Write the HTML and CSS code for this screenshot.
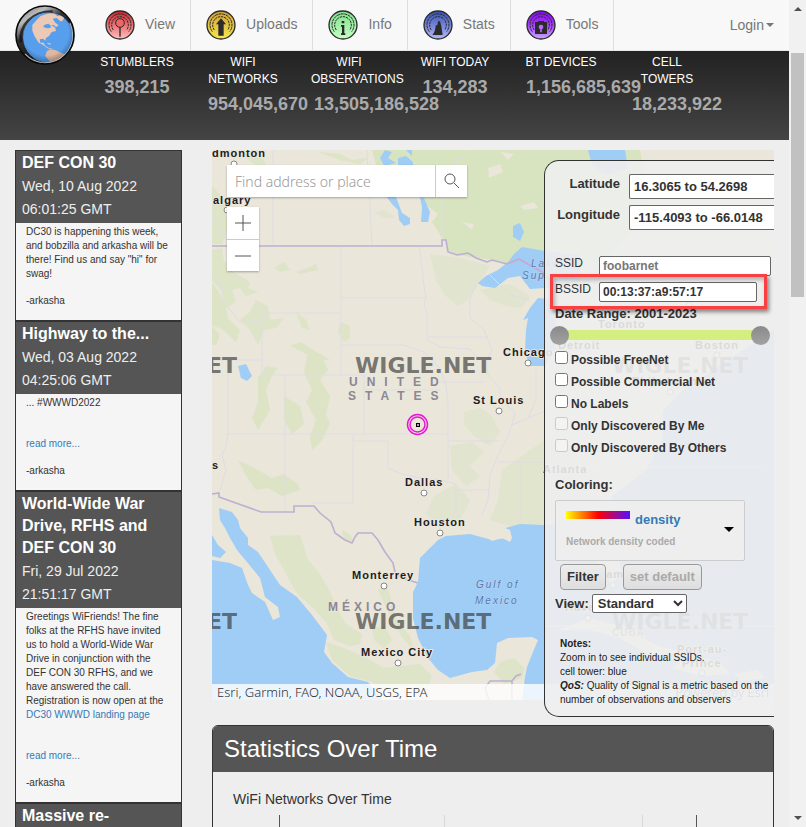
FILE: index.html
```html
<!DOCTYPE html>
<html lang="en">
<head>
<meta charset="utf-8">
<title>WiGLE: Wireless Network Mapping</title>
<meta name="viewport" content="width=device-width, initial-scale=1">
<link rel="stylesheet" href="styles.css">
</head>
<body>
<svg class="defs" aria-hidden="true">
  <defs>
    <linearGradient id="gRed" x2="0" y2="1"><stop stop-color="#c9252c"/><stop offset=".45" stop-color="#e8686b"/><stop offset="1" stop-color="#ffc0c0"/></linearGradient>
    <linearGradient id="gYellow" x2="0" y2="1"><stop stop-color="#cf9f38"/><stop offset="1" stop-color="#f5e74e"/></linearGradient>
    <linearGradient id="gGreen" x2="0" y2="1"><stop stop-color="#7fe08a"/><stop offset="1" stop-color="#c4ffc4"/></linearGradient>
    <linearGradient id="gBlue" x2="0" y2="1"><stop stop-color="#3450b8"/><stop offset="1" stop-color="#b3b6f4"/></linearGradient>
    <linearGradient id="gPurple" x2="0" y2="1"><stop stop-color="#8608f0"/><stop offset=".4" stop-color="#a030ff"/><stop offset="1" stop-color="#caa6fb"/></linearGradient>
    <g id="dial" fill="none" stroke="#2b2b2b">
      <circle cx="45" cy="45" r="42" stroke-width="4"/>
      <path d="M19 65A33 33 0 1 1 71 65" stroke-width="3" stroke-dasharray="9 2"/>
      <path d="M25 60A25 25 0 1 1 65 60" stroke-width="3" stroke-dasharray="7 2"/>
    </g>
  </defs>
</svg>
<div class="window">
  <div class="page">
    <header class="topbar">
      <a class="brand" href="#" aria-label="WiGLE home">
        <svg viewBox="45 15 180 180">
          <defs>
            <linearGradient id="gRim" x1=".1" y1="0" x2=".6" y2=".8"><stop stop-color="#777"/><stop offset=".25" stop-color="#bbb"/><stop offset=".5" stop-color="#333"/><stop offset="1" stop-color="#111"/></linearGradient>
            <radialGradient id="gShade" cx=".45" cy=".4" r=".6"><stop offset=".75" stop-color="#000" stop-opacity="0"/><stop offset="1" stop-color="#123" stop-opacity=".35"/></radialGradient>
            <clipPath id="globe"><circle cx="145" cy="113" r="76"/></clipPath>
          </defs>
          <circle cx="135" cy="105" r="86" fill="url(#gRim)"/>
          <path d="M62 128C58 75 95 35 158 35" fill="none" stroke="#111" stroke-width="8" opacity=".75"/>
          <g clip-path="url(#globe)">
            <circle cx="145" cy="113" r="76" fill="#579eec"/>
            <path fill="#ecc9b4" d="M97 92L97 75L108 62L122 48L140 42L152 40L166 43L172 49L188 43L192 56L184 65L176 59L170 54L158 56L166 68L176 76L168 81L160 74L151 77L146 71L134 74L129 80L140 85L150 84L156 76L166 84L168 93L155 96L147 108L137 115L137 122L129 116L119 118L121 128L131 128L135 137L148 145L160 147L150 148L138 142L126 133L116 128L107 114L103 107Z"/>
            <path fill="#deb8a0" d="M140 154L151 148L166 150L178 156L193 162L194 171L185 181L170 187L151 190L146 180L136 169Z"/>
            <path fill="#ecc9b4" d="M143 128l10 3-2 3-9-3zM128 68l8-3 5 5-8 1zM151 61l7 2-3 4z"/>
            <circle cx="145" cy="113" r="76" fill="url(#gShade)"/>
          </g>
          <path d="M210 68A83 83 0 0 1 75 162" fill="none" stroke="#d5d5d5" stroke-width="4" opacity=".8"/>
          <circle cx="135" cy="105" r="87" fill="none" stroke="#080808" stroke-width="5"/>
        </svg>
      </a>
      <nav class="menu">
        <a href="#"><svg viewBox="0 0 90 90"><circle cx="45" cy="45" r="42" fill="url(#gRed)"/><use href="#dial"/><circle cx="45" cy="39" r="13" fill="#e66" stroke="#2b2b2b" stroke-width="3"/><path d="M45 52V80" stroke="#2b2b2b" stroke-width="4"/></svg>View</a>
        <a href="#"><svg viewBox="0 0 90 90"><circle cx="45" cy="45" r="42" fill="url(#gYellow)"/><use href="#dial"/><path d="M45 25L60 43H53V77H37V43H30Z" fill="#2b2b2b"/></svg>Uploads</a>
        <a href="#"><svg viewBox="0 0 90 90"><circle cx="45" cy="45" r="42" fill="url(#gGreen)"/><use href="#dial"/><path d="M41 33h8v7h-8zM39 45h10v25h3v5H39v-5h3V50h-3z" fill="#2b2b2b"/></svg>Info</a>
        <a href="#"><svg viewBox="0 0 90 90"><circle cx="45" cy="45" r="42" fill="url(#gBlue)"/><use href="#dial"/><path d="M28 75C35 68 37 60 38 46L43 46L45 34H51L55 48L59 75Z" fill="#2b2b2b"/></svg>Stats</a>
        <a href="#"><svg viewBox="0 0 90 90"><circle cx="45" cy="45" r="42" fill="url(#gPurple)"/><use href="#dial"/><path d="M27 36H36V33H54V36H63V72H27Z" fill="#2b2b2b"/><circle cx="45" cy="51" r="7" fill="#b66cff"/><path d="M45 52V67" stroke="#b66cff" stroke-width="5"/></svg>Tools</a>
      </nav>
      <a class="login" href="#">Login<span class="caret"></span></a>
    </header>

    <section class="counters">
      <div class="counter"><h2>Stumblers</h2><p>398,215</p></div>
      <div class="counter"><h2>WiFi Networks</h2><p>954,045,670</p></div>
      <div class="counter"><h2>WiFi Observations</h2><p>13,505,186,528</p></div>
      <div class="counter"><h2>WiFi Today</h2><p>134,283</p></div>
      <div class="counter"><h2>BT Devices</h2><p>1,156,685,639</p></div>
      <div class="counter"><h2>Cell Towers</h2><p>18,233,922</p></div>
    </section>

    <div class="columns">
      <aside class="news">
        <article>
          <header><h3>DEF CON 30</h3><p>Wed, 10 Aug 2022 06:01:25 GMT</p></header>
          <div class="story"><p>DC30 is happening this week, and bobzilla and arkasha will be there! Find us and say "hi" for swag!</p><p>-arkasha</p></div>
        </article>
        <article>
          <header><h3>Highway to the...</h3><p>Wed, 03 Aug 2022 04:25:06 GMT</p></header>
          <div class="story"><p>... #WWWD2022</p><p class="more"><a href="#">read more...</a></p><p>-arkasha</p></div>
        </article>
        <article>
          <header><h3>World-Wide War Drive, RFHS and DEF CON 30</h3><p>Fri, 29 Jul 2022 21:51:17 GMT</p></header>
          <div class="story"><p>Greetings WiFriends! The fine folks at the RFHS have invited us to hold a World-Wide War Drive in conjunction with the DEF CON 30 RFHS, and we have answered the call. Registration is now open at the <a href="#">DC30 WWWD landing page</a></p><p class="more"><a href="#">read more...</a></p><p>-arkasha</p></div>
        </article>
        <article>
          <header><h3>Massive re-</h3></header>
        </article>
      </aside>

      <main>
        <section class="mapbox">
          <svg class="map" viewBox="212 150 562 550" preserveAspectRatio="xMinYMin slice" role="img" aria-label="Map of North America">
            <rect x="212" y="150" width="562" height="550" fill="#eae6da"/>
            <g fill="#d8e3bf">
              <path d="M372 150L545 150H640L650 215L600 262H545L520 250L507 264L492 260L478 258L457 255L447 250L445 240L441 236L432 222L438 214L428 206L418 196L398 196L392 180L378 172Z"/>
              <path opacity=".7" d="M212 185L224 200L228 228L222 244H212ZM224 150L240 152L258 168L266 164L258 150ZM318 152L340 154L352 160L368 158L360 164L340 160ZM212 250L222 248L224 262L232 262L230 270L240 276L250 282L248 288L258 292L246 296L240 288L232 290L236 302L226 308L222 292L212 280ZM274 268L284 262L290 270L280 272ZM296 272L312 266L316 264L318 270L300 274ZM256 300L268 306L270 320L284 318L276 328L264 330L258 345L250 330L240 320L250 312ZM296 312L306 320L310 330L302 328ZM340 322L350 326L350 338L344 342L338 332Z"/>
              <path opacity=".75" d="M212 282L224 300L228 318L240 330L236 342L224 330L212 325ZM212 326L220 335L216 345H212ZM258 378L266 366L278 368L272 376L266 390L270 410L258 430L252 418L258 402ZM308 352L322 356L328 370L320 380L330 396L326 414L330 424L322 440L312 450L310 436L316 420L306 402L312 390L304 372ZM284 396L300 406L304 424L292 434L284 420ZM238 460L258 470L272 478L284 474L298 484L300 490L282 496L268 488L256 490L246 476ZM290 346L300 342L330 360L318 360Z"/>
              <path opacity=".7" d="M270 536L300 535L308 560L320 574L330 592L340 614L346 624L362 634L360 644L350 646L334 640L326 622L310 605L296 592L284 570L276 556ZM326 642L344 648L370 660L384 668L420 664L432 676L428 688L412 684L392 692L372 682L350 676L332 660ZM378 590L386 584L392 602L396 620L410 636L414 650L404 640L396 628L388 612ZM372 628L384 626L392 640L384 648L374 640ZM344 540L354 542L350 534L342 530ZM494 672L500 662L514 658L524 668L522 678L504 684Z"/>
              <path d="M464 412L480 408L490 414L500 432L490 446L474 436L464 424ZM450 446L472 442L484 452L470 466L480 476L466 486L452 470ZM434 496L456 484L470 500L460 520L440 526L426 514ZM430 254L460 258L490 266L480 282L468 300L458 306L446 296L436 280ZM480 290L510 284L530 296L522 308L506 306L490 300ZM374 212L386 210L396 218L384 218Z" opacity=".45"/>
              <path d="M502 470L545 440L600 450V500L545 524L510 526L490 520L498 500Z" opacity=".5"/>
            </g>
            <g fill="#eae6da"><path d="M488 168l12-4 3 8-14 6zM520 206l14-4 4 6-14 2zM500 152l14 2-6 6zM462 222l12 2-2 6z"/></g>
            <g fill="#9fcdf5">
              <path d="M385 150L392 152L388 158L396 163L384 166L380 158ZM398 158L406 156L413 162V170H398ZM406 150L412 150L412 156ZM386 196L396 197L402 213L410 218L410 224L404 226L399 220L398 210L392 204ZM420 197L424 198L430 212L428 222L421 222L422 208ZM513 226L520 223L524 232L520 241L513 237Z"/>
              <path d="M478 283L486 276L498 270L508 262L514 254L522 247L545 251L580 255V282L545 288L530 289L520 276L508 278L495 288L482 286Z"/>
              <path d="M538 298L530 308L523 320L528 318L526 330L525 352L530 366H545L556 350V300Z"/>
              <path d="M588 150H625L628 168L605 175L592 165Z"/>
              <path d="M238 366L246 364L252 376L247 381L241 378Z"/>
              <path d="M219 508L232 512L238 520L240 528L248 538L248 545L258 552L268 567L280 585L297 597L312 615L327 635L324 652L332 663L348 677L368 682L382 700H212V560L230 563L242 568L248 585L252 593L265 602L273 620L280 617L278 607L265 597L260 578L247 562L237 550L230 538L225 528L220 520ZM212 535L218 545L226 552L220 558L212 556Z"/>
              <path d="M438 540L446 536L470 534L492 540L505 538L512 538L510 530L505 528L520 524L545 525L560 522L590 524L596 560L612 585L622 570L606 524L612 496L646 470L662 440L663 410L683 390L774 330V700H522L525 677L527 667L533 652L538 640L532 637L508 638L497 643L495 663L487 670L472 672L450 678L438 670L428 658L418 638L413 618L413 592L418 582L420 558Z"/>
            </g>
            <path fill="#eae6da" d="M486 536L498 532L512 538L510 542L502 538L492 541ZM558 630L590 618L620 626L656 645L682 652L650 656L620 638L590 630ZM672 668L690 655L720 662L730 674L700 676ZM735 674l22-4 8 8-25 3z"/>
            <g fill="none" stroke="#dfdce6" stroke-width="1">
              <path d="M273 150V246M367 150L372 245M442 196V246M341 246V375M341 298H426M419 246L424 285L426 298L424 304L427 312V340L440 347L470 349L480 360M427 337H488M261 313H341M262 313V375M262 375H364V434M228 360V434M212 360H262M285 375V510M228 434H448M353 434V503H312M353 441H388V468L402 474L420 478L440 480L456 484M448 434V480M448 402V434M341 345H404L424 352L440 368L446 385L448 402M364 390H440M212 275L222 286L222 300L232 312L240 322L261 320M475 285L470 300L470 318L484 330L488 340L492 350L486 362L488 375L500 388L500 400L515 412L512 425L506 440L498 455L490 475L488 500L482 515M448 441H500M498 462H545M456 484L456 510L462 530M520 462V522M456 490H490M433 382H486M536 370V400L528 418L512 425M528 418L560 405M228 434L226 446L222 455L226 470L220 490M442 180L450 170L468 150M490 275L510 295L530 300M212 220L222 232L230 246"/>
            </g>
            <g fill="none" stroke="#bcb0d2" stroke-width="1.6">
              <path d="M212 246H442V240H446L448 252L457 255L468 253L476 258L487 262L492 260L507 264"/>
              <path d="M507 264L519 259L542 272L560 280" stroke="#c9a7cc"/>
              <path d="M212 494L219 493V497L261 512H294V506H314L320 513L331 522L335 533L345 540L352 543L355 537L358 533H372L378 540L385 552L393 563L395 572L402 578L418 583M489 700L485 688L490 681H512L516 676L521 674M512 681V700"/>
            </g>
            <path d="M545 626H774M545 467H764" stroke="#fff" stroke-width="1" opacity=".7"/>
            <g class="city">
              <g class="dots"><circle cx="234" cy="164" r="3"/><circle cx="227" cy="210" r="3"/><circle cx="528" cy="363" r="3"/><circle cx="499" cy="411" r="3"/><circle cx="424" cy="493" r="3"/><circle cx="440" cy="533" r="3"/><circle cx="384" cy="586" r="3"/><circle cx="398" cy="663" r="3"/><circle cx="613" cy="585" r="3"/><circle cx="588" cy="618" r="3"/><circle cx="702" cy="673" r="3"/><circle cx="689" cy="305" r="3"/><circle cx="717" cy="355" r="3"/><circle cx="670" cy="392" r="3"/></g>
              <text x="212" y="157">dmonton</text>
              <text x="213" y="204">algary</text>
              <text x="503" y="356">Chicago</text>
              <text x="473" y="404">St Louis</text>
              <text x="405" y="486">Dallas</text>
              <text x="414" y="526">Houston</text>
              <text x="352" y="579">Monterrey</text>
              <text x="361" y="656">Mexico City</text>
              <text x="212" y="469">s</text>
              <text x="598" y="328">Toronto</text>
              <text x="558" y="349">Detroit</text>
              <text x="695" y="349">Boston</text>
              <text x="632" y="385">Philadelphia</text>
              <text x="543" y="473">Atlanta</text>
              <text x="592" y="578">Miami</text>
              <text x="565" y="611">Havana</text>
              <text x="677" y="653">Port-au-</text>
              <text x="682" y="667">Prince</text>
            </g>
            <g class="country">
              <text class="wide" x="349" y="386">UNITED</text>
              <text class="wide" x="348" y="400">STATES</text>
              <text x="328" y="611">MÉXICO</text>
              <text class="small" x="612" y="636">CUBA</text>
            </g>
            <g class="sea">
              <text x="531" y="267">Lake</text><text x="522" y="279">Superior</text>
              <text x="476" y="588">Gulf of</text><text x="475" y="604">Mexico</text>
            </g>
            <g class="mark">
              <text x="355" y="373">WIGLE.NET</text><text x="355" y="629">WIGLE.NET</text>
              <text x="237" y="373" text-anchor="end">ET</text><text x="237" y="629" text-anchor="end">ET</text>
              <text x="612" y="373">WIGLE.NET</text><text x="612" y="629">WIGLE.NET</text>
            </g>
            <g fill="none" stroke="#e815d6" stroke-width="1.5"><circle cx="417.500" cy="424.500" r="10"/><circle cx="417.500" cy="424.500" r="7.500"/></g>
            <rect x="416.500" y="423.500" width="3" height="3" fill="#a9c" stroke="#000"/>
          </svg>
          <form class="search">
            <input type="text" placeholder="Find address or place" aria-label="Find address or place">
            <button type="button" aria-label="Search"><svg viewBox="0 0 16 16"><circle cx="6" cy="6" r="5"/><path d="M10 10L15 15"/></svg></button>
          </form>
          <div class="zoom">
            <button type="button" aria-label="Zoom in"><svg viewBox="0 0 16 16"><path d="M0 8H16M8 0V16"/></svg></button>
            <button type="button" aria-label="Zoom out"><svg viewBox="0 0 16 16"><path d="M0 8H16"/></svg></button>
          </div>
          <div class="credits"><span>Esri, Garmin, FAO, NOAA, USGS, EPA</span><span>Powered by Esri</span></div>

          <form class="filters">
            <div class="range"><label for="lat">Latitude</label><input id="lat" type="text" value="16.3065 to 54.2698"></div>
            <div class="range"><label for="lon">Longitude</label><input id="lon" type="text" value="-115.4093 to -66.0148"></div>
            <div class="ident first"><label for="ssid">SSID</label><input id="ssid" type="text" placeholder="foobarnet"></div>
            <div class="ident marked"><label for="bssid">BSSID</label><input id="bssid" type="text" value="00:13:37:a9:57:17"></div>
            <p class="caption">Date Range: 2001-2023</p>
            <div class="slider">
              <input type="range" min="2001" max="2023" value="2001" aria-label="First year">
              <input type="range" min="2001" max="2023" value="2023" aria-label="Last year">
            </div>
            <div class="checks">
              <label><input type="checkbox">Possible FreeNet</label>
              <label><input type="checkbox">Possible Commercial Net</label>
              <label><input type="checkbox">No Labels</label>
              <label><input type="checkbox" disabled>Only Discovered By Me</label>
              <label><input type="checkbox" disabled>Only Discovered By Others</label>
            </div>
            <p class="caption coloring">Coloring:</p>
            <button type="button" class="scheme">
              <span class="scheme-name"><span class="swatch"></span>density</span>
              <span class="scheme-note">Network density coded</span>
              <span class="arrow"></span>
            </button>
            <div class="actions"><button type="button">Filter</button><button type="button" disabled>set default</button></div>
            <div class="view"><label for="view">View:</label><select id="view"><option>Standard</option></select></div>
            <div class="notes"><p><b>Notes:</b></p><p>Zoom in to see individual SSIDs.</p><p>cell tower: blue</p><p><b><i>QoS:</i></b> Quality of Signal is a metric based on the number of observations and observers</p></div>
          </form>
        </section>

        <section class="panel">
          <h2>Statistics Over Time</h2>
          <h3>WiFi Networks Over Time</h3>
          <svg class="chart" viewBox="0 0 560 300" preserveAspectRatio="xMinYMin slice" aria-hidden="true"><path d="M66.500 0V300M483.500 0V300" stroke="#555"/><path d="M231.500 0V300M429.500 0V300" stroke="#d8d8d8"/></svg>
        </section>
      </main>
    </div>
  </div>
  <div class="scrollbar" aria-hidden="true">
    <span class="up"></span><span class="track"><span class="thumb"></span></span><span class="down"></span>
  </div>
</div>
</body>
</html>
```
FILE: styles.css
```css
* { box-sizing: border-box; }
body { margin: 0; background: #eee; color: #333; font: 14px/20px "Liberation Sans", Arial, sans-serif; }
h2, h3, p { margin: 0; }
a { color: #337ab7; text-decoration: none; }
input, button, select { font: inherit; color: inherit; margin: 0; }
.defs { position: absolute; width: 0; height: 0; }

.window { display: grid; grid-template-columns: 1fr 17px; height: 100vh; overflow: hidden; }
.page { min-width: 0; height: 100vh; overflow: hidden; }

/* Header */
.topbar { display: flex; align-items: stretch; height: 51px; padding: 0 15px; background: #f8f8f8; border-bottom: 1px solid #e7e7e7; }
.brand { position: relative; z-index: 2; width: 60px; height: 60px; margin: 5px 15px 0 0; }
.brand svg { display: block; width: 60px; height: 60px; }
.menu { display: flex; flex: 1; }
.menu a { display: flex; align-items: center; gap: 10px; padding: 0 15px; color: #777; border-right: 1px solid #ddd; line-height: 18px; padding-bottom: 2px; }
.menu svg { width: 30px; height: 30px; margin-top: 2px; }
.login { display: flex; align-items: center; gap: 2px; color: #777; }
.caret { border: 4px solid transparent; border-top-color: #777; border-bottom: 0; }

/* Network totals */
.counters { display: grid; grid-template-columns: repeat(6, 1fr); height: 89px; padding: 3px 69px 0 84px; background: linear-gradient(#222, #444); text-align: center; }
.counter { min-width: 0; }
.counter h2 { padding: 0 15px; font-size: 12px; line-height: 17px; font-weight: 400; text-transform: uppercase; color: #fff; }
.counter p { padding: 6px 18px 0; font-size: 18px; font-weight: 700; color: #aaa; }

.columns { display: grid; grid-template-columns: 167px 1fr; gap: 30px; padding: 10px 15px; align-items: start; }

/* News */
.news article { border: 1px solid #333; background: #f5f5f5; }
.news header { padding: 1px 6px 2px; background: #555; color: #eee; line-height: 23px; }
.news header p { margin-top: 1px; padding-right: 20px; }
.news h3 { font-size: 16px; line-height: 22px; color: #fff; }
.story { padding: 2px 10px 12px; font-size: 10px; line-height: 14px; }
.story p + p { margin-top: 13px; }
.story p + .more { margin-top: 27px; }

/* Map */
.mapbox { position: relative; height: 550px; }
.map { display: block; width: 100%; height: 550px; }
.map text { font-family: "Liberation Sans", Arial, sans-serif; font-weight: 700; paint-order: stroke; stroke: #eae6da; stroke-width: 2px; }
.city text { font-size: 11px; letter-spacing: 1px; fill: #1c1c24; }
.dots circle { fill: #fff; stroke: #888; }
.country text { font-size: 12px; letter-spacing: 4px; fill: #8b8793; }
.country .wide { letter-spacing: 9px; }
.country .small { font-size: 10px; letter-spacing: 1px; }
.sea text { font-size: 10px; font-style: italic; letter-spacing: 2px; fill: #5676b0; stroke: #b9d6f3; stroke-width: 1px; font-weight: 400; }
.mark text { font-family: "DejaVu Sans", sans-serif; font-size: 22px; fill: #333; fill-opacity: .65; stroke: none; }

.search, .zoom { position: absolute; left: 15px; box-shadow: 0 1px 2px rgba(0, 0, 0, .3); background: #fff; }
.search { top: 15px; display: flex; width: 240px; height: 32px; }
.search input { flex: 1; min-width: 0; border: 0; padding: 0 8px; font: 300 14px "Noto Sans", sans-serif; background: none; }
.search input::placeholder { color: #999; }
.search button, .zoom button { display: grid; place-items: center; width: 32px; height: 32px; padding: 0; border: 0; background: none; }
.search button { border-left: 1px solid #ccc; }
.search svg, .zoom svg { width: 16px; height: 16px; fill: none; stroke: #555; }
.zoom { top: 57px; }
.zoom button + button { border-top: 1px solid #ccc; }
.credits { position: absolute; left: 0; right: 0; bottom: 0; display: flex; justify-content: space-between; padding: 0 5px; font: 300 13px/16px "Noto Sans", sans-serif; background: rgba(255, 255, 255, .8); }

/* Filter panel */
.filters { position: absolute; top: 10px; right: 0; width: 230px; padding: 13px 0 9px 10px; border: 1px solid #333; border-right: 0; border-radius: 15px 0 0 15px; background: rgba(238, 238, 238, .9); font-size: 13px; line-height: 18px; font-weight: 700; }
.range { display: flex; gap: 9px; margin-bottom: 6px; }
.range label { width: 65px; line-height: 20px; text-align: right; }
.range input { flex: 1; min-width: 0; height: 25px; padding: 0 4px; background: #fff; border: 1px solid #666; border-right: 0; border-radius: 2px 0 0 2px; }
.ident { display: flex; position: relative; margin-bottom: 6px; font-size: 12px; line-height: 14px; }
.ident label { width: 44px; font-weight: 400; }
.ident input { width: 172px; height: 20px; padding: 0 3px; background: #fff; border: 1px solid #666; border-radius: 2px; }
.ident input::placeholder { color: #777; }
.ident.first { margin-top: 26px; }
.ident.marked { margin-bottom: 3px; }
.ident.marked input { width: 158px; }
.ident.marked::after { content: ""; position: absolute; inset: -8px 7px -7px -5px; border: 3px solid #f94144; box-shadow: 2px 3px 4px rgba(0, 0, 0, .45), inset 2px 3px 4px rgba(0, 0, 0, .25); pointer-events: none; }
.slider { display: grid; width: 220px; height: 20px; margin: 2px 0 4px -5px; background: linear-gradient(#d4ee80, #d4ee80) center / 200px 10px no-repeat; }
.slider input { grid-area: 1 / 1; width: 100%; height: 20px; appearance: none; background: none; pointer-events: none; }
.slider input::-webkit-slider-thumb { appearance: none; width: 19px; height: 19px; border-radius: 50%; background: linear-gradient(#8a8a8a, #a2a2a2); pointer-events: auto; }
.checks label { display: flex; align-items: center; gap: 3px; height: 22px; font-size: 12px; }
.checks input { width: 13px; height: 13px; margin-bottom: 5px; }
.coloring { margin: 17px 0 6px; }
.scheme { display: grid; position: relative; width: 190px; height: 61px; padding: 10px; align-content: start; justify-items: start; text-align: left; font-weight: 700; background: #eee; border: 1px solid #ccc; border-radius: 2px; }
.scheme-name { display: flex; gap: 5px; color: #337ab7; }
.swatch { width: 64px; height: 8px; background: linear-gradient(90deg, #ff0, #f00 50%, #51f); }
.scheme-note { margin-top: 4px; font-size: 10px; color: #aaa; }
.arrow { position: absolute; right: 10px; top: 26px; border: 5px solid transparent; border-top-color: #000; border-bottom: 0; }
.actions { display: flex; gap: 17px; margin: 3px 5px 4px; }
.actions button { height: 26px; padding: 0 6px; font-weight: 700; border: 1px solid #999; border-radius: 4px; background: linear-gradient(#ececec, #dedede); }
.actions button:disabled { color: #aaa; }
.view { display: flex; align-items: center; gap: 3px; height: 19px; }
.view select { width: 95px; height: 19px; padding: 0 1px; font-weight: 700; background: #fff; border: 1px solid #666; border-radius: 2px; }
.notes { margin: 24px 5px 0; font-size: 10px; line-height: 14px; font-weight: 400; color: #222; }

/* Statistics */
.panel { margin-top: 25px; border: 1px solid #333; border-radius: 6px 6px 0 0; overflow: hidden; }
.panel h2 { padding: 0 11px; font-size: 24px; line-height: 46px; font-weight: 400; color: #fff; background: #555; }
.panel h3 { padding: 17px 20px 6px; font-size: 14px; line-height: 20px; font-weight: 400; }
.chart { display: block; width: 100%; height: 300px; }

/* Window scrollbar */
.scrollbar { display: flex; flex-direction: column; align-items: center; padding: 7px 0; background: #f1f1f1; }
.up, .down { border: 4px solid transparent; }
.up { border-bottom-color: #505050; border-top: 0; }
.down { border-top-color: #505050; border-bottom: 0; }
.track { flex: 1; width: 13px; padding-top: 42px; }
.thumb { display: block; height: 32%; background: #c1c1c1; }
```
